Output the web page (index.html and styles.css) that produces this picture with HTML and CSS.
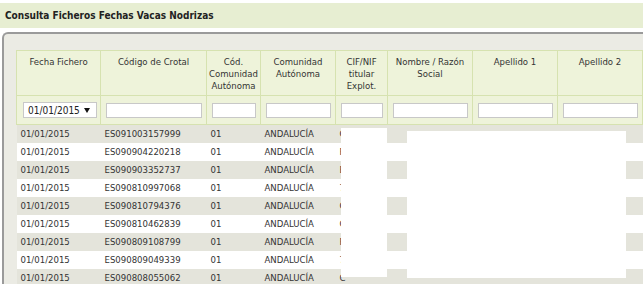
FILE: index.html
```html
<!DOCTYPE html>
<html lang="es">
<head>
    <meta charset="UTF-8">
    <title>Consulta Ficheros Fechas Vacas Nodrizas</title>
    <link rel="stylesheet" href="styles.css">
</head>
<body>
    <div class="title-bar">Consulta Ficheros Fechas Vacas Nodrizas</div>

    <div class="panel">
        <div class="grid-wrap">
            <table class="grid">
                <colgroup>
                    <col style="width:84px">
                    <col style="width:106px">
                    <col style="width:54px">
                    <col style="width:75px">
                    <col style="width:52px">
                    <col style="width:85px">
                    <col style="width:85px">
                    <col style="width:85px">
                </colgroup>
                <thead>
                    <tr class="head-row">
                        <th>Fecha Fichero</th>
                        <th>Código de Crotal</th>
                        <th>Cód. Comunidad Autónoma</th>
                        <th>Comunidad Autónoma</th>
                        <th>CIF/NIF titular Explot.</th>
                        <th>Nombre / Razón Social</th>
                        <th>Apellido 1</th>
                        <th>Apellido 2</th>
                    </tr>
                    <tr class="filter-row">
                        <td>
                            <div class="fake-select">
                                <span>01/01/2015</span>
                                <svg width="6" height="5" viewBox="0 0 6 5"><path d="M0 0H6L3 5Z" fill="#111"/></svg>
                            </div>
                        </td>
                        <td><input type="text"></td>
                        <td><input type="text"></td>
                        <td><input type="text"></td>
                        <td><input type="text"></td>
                        <td><input type="text"></td>
                        <td><input type="text"></td>
                        <td><input type="text"></td>
                    </tr>
                </thead>
                <tbody>
                    <tr><td>01/01/2015</td><td>ES091003157999</td><td>01</td><td>ANDALUCÍA</td><td>C</td><td></td><td></td><td></td></tr>
                    <tr><td>01/01/2015</td><td>ES090904220218</td><td>01</td><td>ANDALUCÍA</td><td>F</td><td></td><td></td><td></td></tr>
                    <tr><td>01/01/2015</td><td>ES090903352737</td><td>01</td><td>ANDALUCÍA</td><td>E</td><td></td><td></td><td></td></tr>
                    <tr><td>01/01/2015</td><td>ES090810997068</td><td>01</td><td>ANDALUCÍA</td><td>7</td><td></td><td></td><td></td></tr>
                    <tr><td>01/01/2015</td><td>ES090810794376</td><td>01</td><td>ANDALUCÍA</td><td>C</td><td></td><td></td><td></td></tr>
                    <tr><td>01/01/2015</td><td>ES090810462839</td><td>01</td><td>ANDALUCÍA</td><td>C</td><td></td><td></td><td></td></tr>
                    <tr><td>01/01/2015</td><td>ES090809108799</td><td>01</td><td>ANDALUCÍA</td><td>F</td><td></td><td></td><td></td></tr>
                    <tr><td>01/01/2015</td><td>ES090809049339</td><td>01</td><td>ANDALUCÍA</td><td>7</td><td></td><td></td><td></td></tr>
                    <tr><td>01/01/2015</td><td>ES090808055062</td><td>01</td><td>ANDALUCÍA</td><td>C</td><td></td><td></td><td></td></tr>
                </tbody>
            </table>

            <!-- blanked-out personal data -->
            <div class="redact redact-cif"></div>
            <div class="redact redact-name"></div>
        </div>
    </div>
</body>
</html>
```

FILE: styles.css
```css
html, body {
    margin: 0;
    padding: 0;
    overflow: hidden;
    background-color: #fff;
}

body {
    font-family: "DejaVu Sans Condensed", "DejaVu Sans", sans-serif;
    font-stretch: condensed;
    font-size: 9.5px;
    color: #333;
}

.title-bar {
    margin-top: 3px;
    height: 25px;
    line-height: 26px;
    padding-left: 5px;
    background-color: #e7eed2;
    font-weight: bold;
    font-size: 10px;
    color: #222;
}

.panel {
    margin: 4px 0 0 2px;
    width: 700px;
    height: 300px;
    padding: 16px 0 0 12px;
    border-top: 2px solid #9a9a9a;
    border-left: 2px solid #9a9a9a;
    border-top-left-radius: 6px;
    background-color: #ebebe4;
}

.grid-wrap {
    position: relative;
}

.grid {
    border-collapse: collapse;
    table-layout: fixed;
    width: 626px;
}

.grid thead th,
.grid thead td {
    background-color: #eef3da;
    border: 1px solid #d6e2b0;
}

.head-row th {
    height: 39px;
    padding: 5px 2px 0;
    vertical-align: top;
    text-align: center;
    font-weight: normal;
    line-height: 12px;
    color: #333;
}

.filter-row td {
    height: 21px;
    padding: 7px 4px 0 5px;
    vertical-align: top;
}

.filter-row input {
    box-sizing: border-box;
    display: block;
    width: 100%;
    height: 15px;
    margin: 0;
    border: 1px solid #c8c8c8;
    background-color: #fff;
}

.fake-select {
    box-sizing: border-box;
    height: 16px;
    width: 74px;
    margin: -1px 0 0 1px;
    padding: 0 6px 0 4px;
    display: flex;
    align-items: center;
    justify-content: space-between;
    border: 1px solid #c8c8c8;
    background-color: #fff;
    color: #222;
    font-size: 10px;
}

.grid tbody td {
    height: 18px;
    padding: 0 0 0 4px;
    line-height: 18px;
    white-space: nowrap;
    overflow: hidden;
    vertical-align: middle;
}

.grid tbody tr:nth-child(odd) td {
    background-color: #e4e4db;
}

.grid tbody tr:nth-child(even) td {
    background-color: #fff;
}

.redact {
    position: absolute;
    background-color: #fff;
}

.redact-cif {
    left: 325px;
    top: 78px;
    width: 46px;
    height: 149px;
}

.redact-name {
    left: 391px;
    top: 81px;
    width: 219px;
    height: 147px;
}
```
